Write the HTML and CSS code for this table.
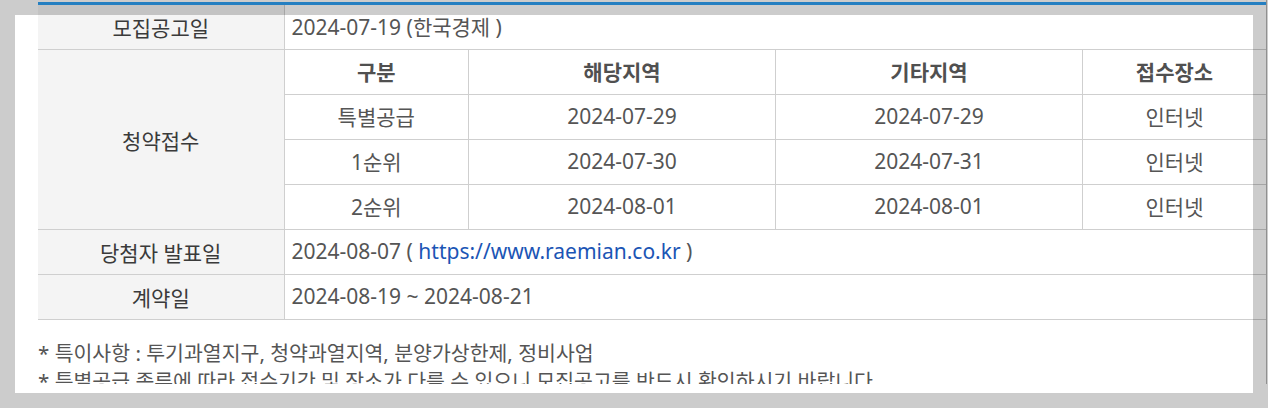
FILE: index.html
```html
<!DOCTYPE html>
<html lang="ko">
<head>
  <meta charset="UTF-8">
  <meta name="viewport" content="width=device-width,initial-scale=1.0">
  <title>청약 일정</title>
  <link rel="stylesheet" href="styles.css">
</head>
<body>
  <div class="page">
    <table class="info">
      <colgroup>
        <col class="col-label">
        <col>
      </colgroup>
      <tr class="first">
        <th>모집공고일</th>
        <td>2024-07-19 (한국경제 )</td>
      </tr>
      <tr>
        <th>청약접수</th>
        <td class="nested">
          <table class="sub">
            <colgroup>
              <col class="c1"><col class="c2"><col class="c3"><col class="c4">
            </colgroup>
            <tr>
              <th>구분</th><th>해당지역</th><th>기타지역</th><th>접수장소</th>
            </tr>
            <tr>
              <td>특별공급</td><td>2024-07-29</td><td>2024-07-29</td><td>인터넷</td>
            </tr>
            <tr>
              <td>1순위</td><td>2024-07-30</td><td>2024-07-31</td><td>인터넷</td>
            </tr>
            <tr>
              <td>2순위</td><td>2024-08-01</td><td>2024-08-01</td><td>인터넷</td>
            </tr>
          </table>
        </td>
      </tr>
      <tr>
        <th>당첨자 발표일</th>
        <td>2024-08-07 ( <a href="#">https://www.raemian.co.kr</a> )</td>
      </tr>
      <tr>
        <th>계약일</th>
        <td>2024-08-19 ~ 2024-08-21</td>
      </tr>
    </table>

    <ul class="notes">
      <li>* 특이사항 : 투기과열지구, 청약과열지역, 분양가상한제, 정비사업</li>
      <li>* 특별공급 종류에 따라 접수기간 및 장소가 다를 수 있으니 모집공고를 반드시 확인하시기 바랍니다</li>
    </ul>
  </div>

  <!-- dimmed backdrop with a highlighted window -->
  <div class="spotlight"></div>
</body>
</html>
```

FILE: styles.css
```css
* { margin:0; padding:0; box-sizing:border-box; }
body {
  background:#fff;
  font-family:"Noto Sans", "Noto Sans CJK KR", sans-serif;
  color:#555;
  overflow:hidden;
}
.page {
  width:1267px; height:384px;
  overflow:hidden;
  padding:2px 0 0 38px;
  border-right:1px solid #b4b4b4;
}

/* main info table */
.info {
  width:1228px;
  border-collapse:collapse;
  table-layout:fixed;
  border-top:3px solid #2f9ff2;
}
.info .col-label { width:246px; }
.info > tbody > tr > th,
.info > tbody > tr > td {
  height:45px;
  border-bottom:1px solid #cfcfcf;
  font-size:21px;
}
.info > tbody > tr.first > th,
.info > tbody > tr.first > td { height:46px; }
.info > tbody > tr > th {
  background:#f4f4f4;
  color:#3a3a3a;
  font-weight:normal;
  border-right:1px solid #cfcfcf;
  text-align:center;
}
.info > tbody > tr > td {
  padding:0 0 2px 7px;
  text-align:left;
}
.info td.nested { padding:0; }
.info a { color:#1b55b5; text-decoration:none; }

/* nested schedule table */
.sub {
  width:100%;
  border-collapse:collapse;
  table-layout:fixed;
}
.sub .c1 { width:184px; }
.sub .c2 { width:307px; }
.sub .c3 { width:307px; }
.sub th, .sub td {
  height:45px;
  text-align:center;
  font-size:21px;
  border-left:1px solid #cfcfcf;
  border-bottom:1px solid #cfcfcf;
  padding-bottom:2px;
}
.sub tr:first-child > * { height:44px; }
.sub th { font-weight:600; color:#505050; }
.sub tr > :first-child { border-left:none; }
.sub tr:last-child > * { border-bottom:none; }

/* footnotes */
.notes {
  list-style:none;
  margin-top:19px;
  font-size:20.5px;
  line-height:28px;
}

/* dim overlay around the highlighted area */
.spotlight {
  position:absolute;
  top:15px; left:15px;
  width:1238px; height:378px;
  box-shadow:0 0 0 3000px rgba(0,0,0,0.2);
  pointer-events:none;
}
```
